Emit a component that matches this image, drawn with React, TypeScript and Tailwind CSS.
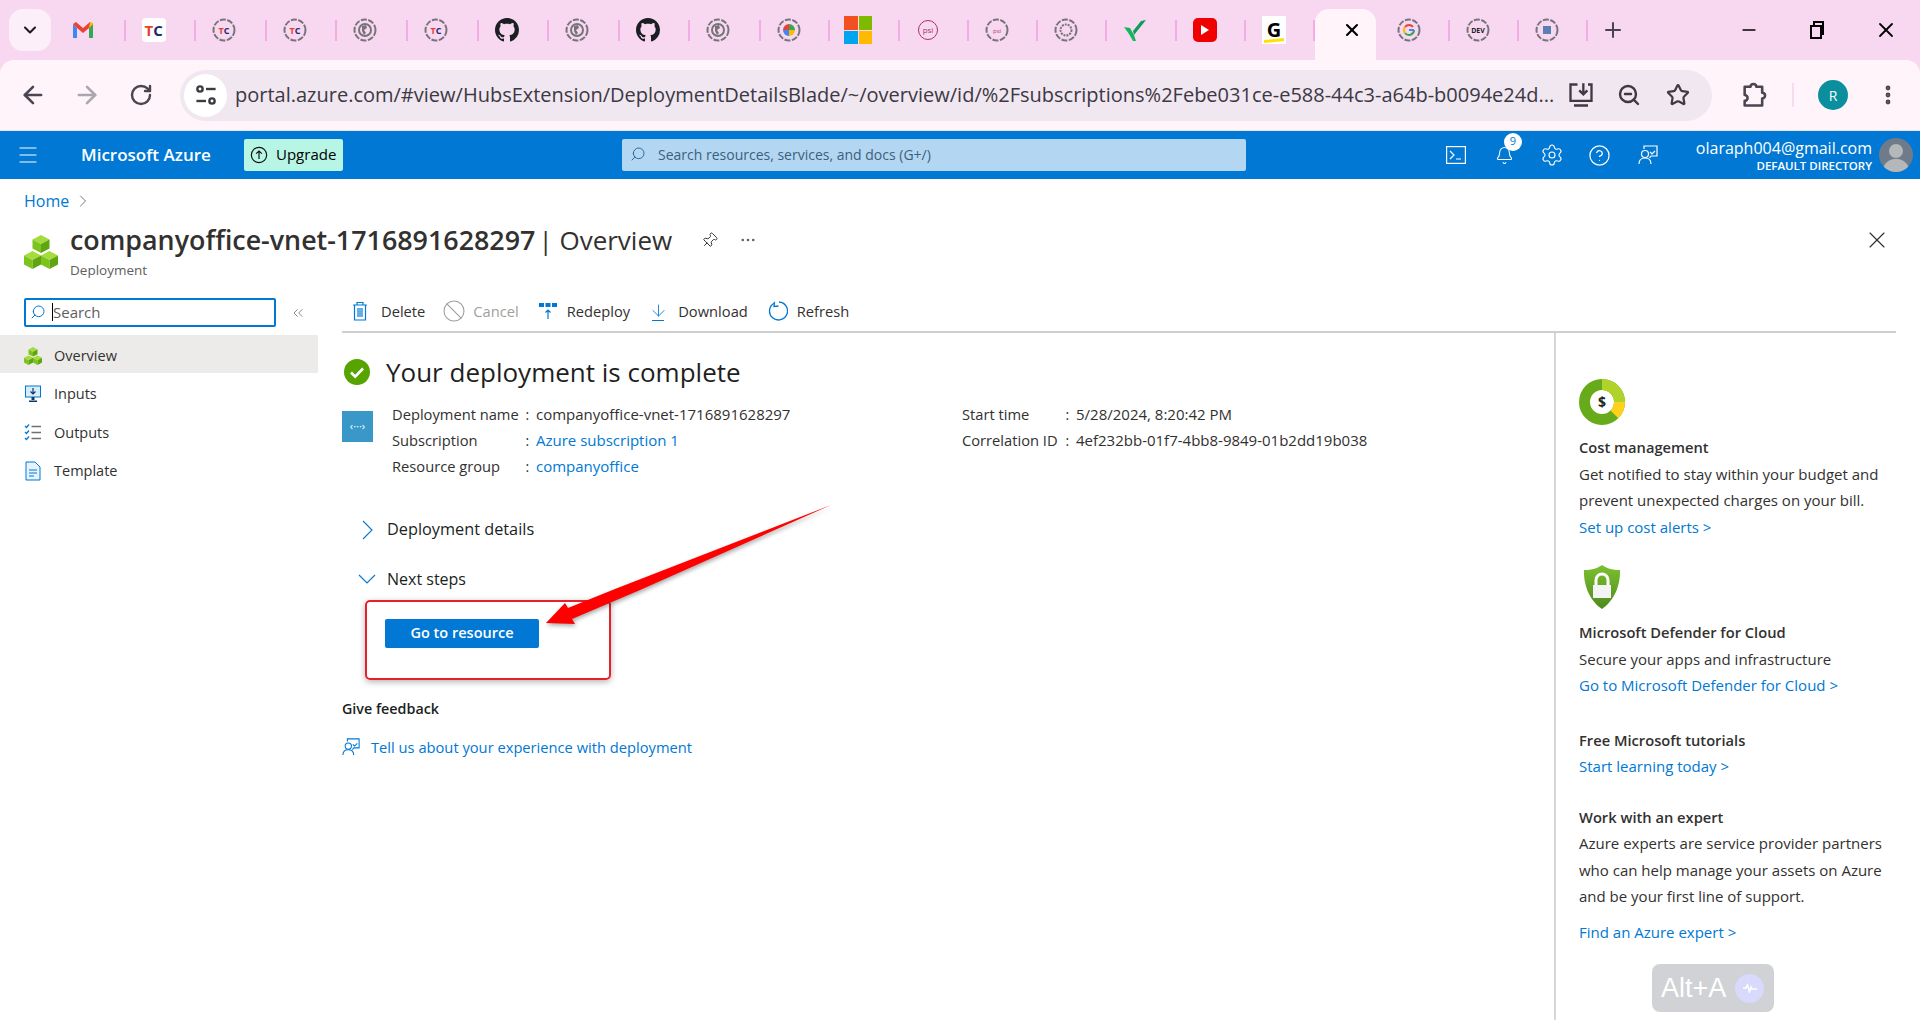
import React from 'react';
import {
  ArrowLeft, ArrowRight, RotateCw, ChevronDown, X, Plus, Minus, Search, Star, MoreVertical,
  Settings, HelpCircle, Bell, Menu, ChevronRight, ChevronsLeft, Pin, MoreHorizontal,
  ArrowDown, Ban, ZoomOut,
} from 'lucide-react';

const Ring = ({ children }: { children?: React.ReactNode }) => (
  <svg viewBox="0 0 24 24" className="h-6 w-6">
    <circle cx="12" cy="12" r="10.5" fill="none" stroke="#77737a" strokeWidth="2" strokeDasharray="6 1.5" />
    {children}
  </svg>
);

const tc = (
  <text x="12" y="15.5" fontSize="9" fontWeight="700" textAnchor="middle" fill="#1b2a6b">
    <tspan fill="#e8402a">T</tspan>C
  </text>
);
const globe = (
  <>
    <circle cx="12" cy="12" r="6" fill="none" stroke="#77737a" strokeWidth="2" />
    <path d="M9 8l4-1 1 3-3 2 2 3-2 2-2-4z" fill="#77737a" />
  </>
);

const GitHub = () => (
  <svg viewBox="0 0 16 16" className="h-6 w-6" fill="#1b1f24">
    <path d="M8 0C3.58 0 0 3.58 0 8c0 3.54 2.29 6.53 5.47 7.59.4.07.55-.17.55-.38 0-.19-.01-.82-.01-1.49-2.01.37-2.53-.49-2.69-.94-.09-.23-.48-.94-.82-1.13-.28-.15-.68-.52-.01-.53.63-.01 1.08.58 1.23.82.72 1.21 1.87.87 2.33.66.07-.52.28-.87.51-1.07-1.78-.2-3.64-.89-3.64-3.95 0-.87.31-1.59.82-2.15-.08-.2-.36-1.02.08-2.12 0 0 .67-.21 2.2.82.64-.18 1.32-.27 2-.27s1.36.09 2 .27c1.53-1.04 2.2-.82 2.2-.82.44 1.1.16 1.92.08 2.12.51.56.82 1.27.82 2.15 0 3.07-1.87 3.75-3.65 3.95.29.25.54.73.54 1.48 0 1.07-.01 1.93-.01 2.2 0 .21.15.46.55.38A8.01 8.01 0 0 0 16 8c0-4.42-3.58-8-8-8Z" />
  </svg>
);

const Gmail = () => (
  <svg viewBox="0 0 24 24" className="h-6 w-6">
    <path d="M2 6v14h4V10z" fill="#4285f4" />
    <path d="M18 10v10h4V6z" fill="#34a853" />
    <path d="M2 6l4 4 6 5 6-5 4-4-3-2-7 6-7-6z" fill="#ea4335" />
    <path d="M18 10l4-4v-1l-3-1z" fill="#fbbc04" />
  </svg>
);

const MsLogo = () => (
  <div className="-ml-[2px] grid h-7 w-7 grid-cols-2 gap-[1px]">
    <div className="bg-[#f25022]" />
    <div className="bg-[#7fba00]" />
    <div className="bg-[#00a4ef]" />
    <div className="bg-[#ffb900]" />
  </div>
);

const tabIcons: React.ReactNode[] = [
  <Gmail />,
  <div className="flex h-6 w-6 items-center justify-center rounded-sm bg-white text-[15px] font-bold leading-none text-[#1b2a6b]"><span className="text-[#e8402a]">T</span>C</div>,
  <Ring>{tc}</Ring>,
  <Ring>{tc}</Ring>,
  <Ring>{globe}</Ring>,
  <Ring>{tc}</Ring>,
  <GitHub />,
  <Ring>{globe}</Ring>,
  <GitHub />,
  <Ring>{globe}</Ring>,
  <Ring>
    <path d="M12 6a6 6 0 0 0-6 6h6z" fill="#ea4335" />
    <path d="M12 6a6 6 0 0 1 6 6h-6z" fill="#34a853" />
    <path d="M6 12a6 6 0 0 0 6 6v-6z" fill="#4285f4" />
    <path d="M18 12a6 6 0 0 1-6 6v-6z" fill="#fbbc04" />
  </Ring>,
  <MsLogo />,
  <svg viewBox="0 0 24 24" className="h-6 w-6">
    <circle cx="12" cy="12" r="9.5" fill="none" stroke="#a8326e" strokeWidth="1" />
    <text x="12" y="15" fontSize="8" textAnchor="middle" fill="#a8326e">psi</text>
  </svg>,
  <Ring><text x="12" y="14.5" fontSize="6" textAnchor="middle" fill="#a8326e">psi</text></Ring>,
  <Ring><circle cx="12" cy="12" r="5.5" fill="none" stroke="#77737a" strokeWidth="2" strokeDasharray="2 1" /></Ring>,
  <svg viewBox="0 0 24 24" className="h-6 w-6">
    <path d="M1 9l6 1 4 7 2 6h-3L6 16z" fill="#16b55d" />
    <path d="M11 17L23 2l-5 1-8 10z" fill="#0f9d58" />
  </svg>,
  <div className="flex h-6 w-6 items-center justify-center rounded-[5px] bg-[#f00000]">
    <div className="h-0 w-0 border-y-[5px] border-l-[8px] border-y-transparent border-l-white" />
  </div>,
  <div className="relative flex h-7 w-6 items-center justify-center bg-white text-[20px] font-bold leading-none text-black">
    G
    <div className="absolute bottom-[2px] left-[2px] h-[3px] w-5 -rotate-6 bg-[#ffe100]" />
  </div>,
];

const tabIconsAfter: React.ReactNode[] = [
  <Ring>
    <path d="M17 12a5 5 0 0 1-9 3" fill="none" stroke="#34a853" strokeWidth="2" />
    <path d="M8 15a5 5 0 0 1 0-6" fill="none" stroke="#fbbc04" strokeWidth="2" />
    <path d="M8 9a5 5 0 0 1 8 0" fill="none" stroke="#ea4335" strokeWidth="2" />
    <path d="M12 12h5" stroke="#4285f4" strokeWidth="2" />
  </Ring>,
  <Ring><text x="12" y="14.5" fontSize="7" fontWeight="700" textAnchor="middle" fill="#222">DEV</text></Ring>,
  <Ring><rect x="8" y="8" width="8" height="8" fill="#5b7fb5" /></Ring>,
];

const Tab = ({ icon, width }: { icon: React.ReactNode; width: string }) => (
  <div className={`relative flex h-[60px] shrink-0 items-center pl-[16px] ${width}`}>
    {icon}
    <div className="absolute right-0 top-[20px] h-[21px] w-[2px] bg-[#f2aee4]" />
  </div>
);

const TabStrip = () => (
  <div className="flex h-[60px] items-center bg-[#f8d8f0]">
    <div className="ml-[9px] mr-[4px] mt-[9px] flex h-[42px] w-[42px] shrink-0 items-center justify-center self-start rounded-[14px] bg-[#fdeffa]">
      <ChevronDown className="h-5 w-5 text-[#1d1b20]" strokeWidth={2.5} />
    </div>
    {tabIcons.map((icon, i) => (
      <Tab key={i} icon={icon} width={i < 10 ? 'w-[70.6px]' : 'w-[69.3px]'} />
    ))}
    <div className="flex h-[51px] w-[61px] shrink-0 items-center justify-center self-end rounded-t-[14px] bg-[#fff4fa] pb-[9px] pl-[13px]">
      <X className="h-5 w-5 text-black" strokeWidth={2.5} />
    </div>
    <div className="ml-[5px] flex shrink-0">
      {tabIconsAfter.map((icon, i) => (
        <Tab key={i} icon={icon} width="w-[69px]" />
      ))}
    </div>
    <Plus className="ml-[13px] h-6 w-6 shrink-0 text-[#48454e]" strokeWidth={2} />
    <Minus className="ml-[114px] h-5 w-5 shrink-0 text-black" strokeWidth={2} />
    <svg viewBox="0 0 20 20" className="ml-[48px] h-5 w-5 shrink-0" fill="none" stroke="black" strokeWidth="2">
      <rect x="4" y="6" width="10" height="12" />
      <path d="M7 5V2h9v12h-2" />
    </svg>
    <X className="ml-[47px] h-6 w-6 shrink-0 text-black" strokeWidth={1.8} />
  </div>
);

const UrlBar = () => (
  <div className="bg-[#f8d8f0]">
    <div className="flex h-[70px] items-center rounded-t-[14px] bg-[#fff4fa]">
      <ArrowLeft className="ml-[19px] h-7 w-7 shrink-0 text-[#4a4550]" strokeWidth={2.2} />
      <ArrowRight className="ml-[26px] h-7 w-7 shrink-0 text-[#aaa6ad]" strokeWidth={2.2} />
      <RotateCw className="ml-[28px] h-6 w-6 shrink-0 text-[#4a4550]" strokeWidth={2.4} />
      <div className="ml-[27px] flex h-[51px] w-[1532px] shrink-0 items-center rounded-full bg-[#f0e7f0]">
        <div className="ml-[4px] flex h-[43px] w-[43px] shrink-0 items-center justify-center rounded-full bg-white">
          <svg viewBox="0 0 20 20" className="h-6 w-6" fill="none" stroke="#3d3a42" strokeWidth="2">
            <circle cx="5" cy="5" r="2.2" /><path d="M10 5h8" />
            <circle cx="15" cy="15" r="2.2" /><path d="M2 15h8" />
          </svg>
        </div>
        <span className="ml-[8px] w-[1320px] truncate whitespace-nowrap text-[20px] text-[#3c3844]">
          portal.azure.com/#view/HubsExtension/DeploymentDetailsBlade/~/overview/id/%2Fsubscriptions%2Febe031ce-e588-44c3-a64b-b0094e24d...
        </span>
        <svg viewBox="0 0 24 24" className="ml-[12px] h-7 w-7 shrink-0" fill="none" stroke="#3d3a42" strokeWidth="2">
          <path d="M9 3H3v14h18V3h-3M6 21h12" /><path d="M14 2v9m-3.5-3 3.5 3.5L17.5 8" />
        </svg>
        <ZoomOut className="ml-[22px] h-6 w-6 shrink-0 text-[#3d3a42]" strokeWidth={2.4} />
        <Star className="ml-[25px] h-6 w-6 shrink-0 text-[#3d3a42]" strokeWidth={2.2} />
      </div>
      <svg viewBox="0 0 24 24" className="ml-[28px] h-7 w-7 shrink-0" fill="none" stroke="#4a4550" strokeWidth="2.2" strokeLinejoin="round">
        <path d="M4 5h5a2.5 2.5 0 0 1 5 0h5v5a2.5 2.5 0 0 1 0 5v6H4v-4a2.5 2.5 0 0 0 0-5z" />
      </svg>
      <div className="ml-[24px] h-[24px] w-[2px] shrink-0 bg-[#f7dcef]" />
      <div className="ml-[24px] flex h-[30px] w-[30px] shrink-0 items-center justify-center rounded-full bg-[#0b8f9e] text-[14px] text-white">R</div>
      <MoreVertical className="ml-[28px] h-6 w-6 shrink-0 text-[#4a4550]" strokeWidth={2.8} />
    </div>
  </div>
);

const FeedbackIcon = ({ className, stroke }: { className: string; stroke: string }) => (
  <svg viewBox="0 0 20 20" className={className} fill="none" stroke={stroke} strokeWidth="1.2">
    <circle cx="7" cy="9" r="3.5" />
    <path d="M1 19c0-4 2.5-6 6-6s6 2 6 6" />
    <path d="M6 4V1h13v10h-6l-1.5 2" />
    <path d="M12 7l2 2 3-3" />
  </svg>
);

const PortalHeader = () => (
  <header className="flex h-[48px] items-center bg-[#0078d4] text-white">
    <Menu className="ml-[16px] h-6 w-6 shrink-0" strokeWidth={1.2} />
    <span className="ml-[41px] w-[131px] shrink-0 whitespace-nowrap text-[17px] font-semibold">Microsoft Azure</span>
    <div className="ml-[32px] flex h-[32px] w-[99px] shrink-0 items-center rounded-[2px] bg-[#b7f5e4] pb-[1px] text-[15px] text-black">
      <svg viewBox="0 0 20 20" className="ml-[6px] mr-[8px] h-[18px] w-[18px]" fill="none" stroke="#111" strokeWidth="1.3">
        <circle cx="10" cy="10" r="8.5" /><path d="M10 14.5v-9M6.8 8.5 10 5.5l3.2 3" />
      </svg>
      Upgrade
    </div>
    <div className="ml-[279px] flex h-[32px] w-[624px] shrink-0 items-center rounded-[2px] bg-[#b3d7f2] pb-[2px] text-[14px] text-[#3b5f7d]">
      <Search className="ml-[8px] mr-[12px] h-4 w-4 -scale-x-100 text-[#2f6a99]" strokeWidth={1.5} />
      Search resources, services, and docs (G+/)
    </div>
    <svg viewBox="0 0 20 18" className="ml-[200px] h-[18px] w-[20px] shrink-0" fill="none" stroke="white" strokeWidth="1.2">
      <rect x="0.6" y="0.6" width="18.8" height="16.8" />
      <path d="M4 5l4 4-4 4M10 13h5" />
    </svg>
    <div className="relative ml-[29px] shrink-0">
      <Bell className="h-[19px] w-[19px]" strokeWidth={1.3} />
      <div className="absolute -right-[8px] -top-[13px] flex h-[18px] w-[18px] items-center justify-center rounded-full bg-white text-[11px] text-[#0078d4]">9</div>
    </div>
    <Settings className="ml-[26px] h-6 w-6 shrink-0" strokeWidth={1.1} />
    <HelpCircle className="ml-[24px] h-[23px] w-[23px] shrink-0" strokeWidth={1.3} />
    <FeedbackIcon className="ml-[27px] h-5 w-5 shrink-0" stroke="white" />
    <div className="ml-auto flex flex-col items-end whitespace-nowrap">
      <span className="text-[16px] leading-[20px]">olaraph004@gmail.com</span>
      <span className="text-[11.5px] font-semibold leading-[15px]">DEFAULT DIRECTORY</span>
    </div>
    <div className="relative ml-[7px] mr-[7px] h-[34px] w-[34px] shrink-0 overflow-hidden rounded-full bg-[#6f7b88]">
      <div className="absolute left-[10px] top-[6px] h-[14px] w-[14px] rounded-full bg-[#b4b8bb]" />
      <div className="absolute left-[4px] top-[21px] h-[16px] w-[26px] rounded-t-[12px] bg-[#b4b8bb]" />
    </div>
  </header>
);

const Cubes = ({ className }: { className: string }) => (
  <svg viewBox="0 0 34 34" className={className}>
    {[[17, 0], [8.5, 16], [25.5, 16]].map(([x, y], i) => (
      <g key={i} transform={`translate(${x - 8.5} ${y})`}>
        <path d="M8.5 0 17 4.5 8.5 9 0 4.5z" fill="#a4dc3c" />
        <path d="M0 4.5 8.5 9v9L0 13.5z" fill="#7cc31e" />
        <path d="M17 4.5 8.5 9v9l8.5-4.5z" fill="#5ea50f" />
      </g>
    ))}
  </svg>
);

const PageTitle = () => (
  <div className="relative h-[116px] shrink-0">
    <div className="flex h-[42px] items-center pl-[24px] pt-[2px] text-[16px] text-[#0078d4]">
      Home
      <ChevronRight className="ml-[4px] h-5 w-5 text-[#605e5c]" strokeWidth={1} />
    </div>
    <div className="flex pl-[24px] pt-[3px]">
      <Cubes className="mt-[11px] h-[34px] w-[34px]" />
      <div className="ml-[12px]">
        <div className="flex h-[32px] items-center whitespace-nowrap text-[26.85px] leading-[32px] text-[#323130]">
          <span className="font-semibold">companyoffice-vnet-1716891628297</span>
          <span className="ml-[3px] text-[26px]">| Overview</span>
          <Pin className="ml-[29px] h-[17px] w-[17px] rotate-45 text-[#323130]" strokeWidth={1.3} />
          <MoreHorizontal className="ml-[21px] h-[18px] w-[18px] text-[#605e5c]" strokeWidth={1.5} />
        </div>
        <div className="mt-[5px] text-[13.5px] leading-[18px] text-[#605e5c]">Deployment</div>
      </div>
    </div>
    <X className="absolute right-[29px] top-[47px] h-7 w-7 text-[#323130]" strokeWidth={1} />
  </div>
);

const InputsIcon = () => (
  <svg viewBox="0 0 18 18" className="h-[18px] w-[18px]">
    <rect x="1.5" y="1" width="15" height="11" fill="#d6ecfb" stroke="#0078d4" />
    <path d="M9 3v6M6.5 6.5 9 9l2.5-2.5" fill="none" stroke="#0b3a6b" strokeWidth="1.2" />
    <path d="M7.5 12h3v3h-3zM5 15.5h8V17H5z" fill="#0b3a6b" />
  </svg>
);

const OutputsIcon = () => (
  <svg viewBox="0 0 18 18" className="h-[18px] w-[18px]" fill="none" strokeWidth="1.3">
    <path d="M1 3l1.5 1.5L5 1.5M1 9l1.5 1.5L5 7.5M1 15l1.5 1.5L5 13.5" stroke="#0078d4" />
    <path d="M7.5 3.5H17M7.5 9.5H17M7.5 15.5H17" stroke="#707070" strokeWidth="1.6" />
  </svg>
);

const TemplateIcon = () => (
  <svg viewBox="0 0 18 20" className="h-[20px] w-[18px]">
    <path d="M2 1h9l5 5v13H2z" fill="#e6f3fc" stroke="#0078d4" />
    <path d="M5 9h8M5 12h8M5 15h5" stroke="#0078d4" />
  </svg>
);

const sideItems: { label: string; icon: React.ReactNode; active?: boolean }[] = [
  { label: 'Overview', icon: <Cubes className="h-[18px] w-[18px]" />, active: true },
  { label: 'Inputs', icon: <InputsIcon /> },
  { label: 'Outputs', icon: <OutputsIcon /> },
  { label: 'Template', icon: <TemplateIcon /> },
];

const Sidebar = () => (
  <aside className="w-[318px] shrink-0 pt-[3px]">
    <div className="flex items-center pl-[24px]">
      <div className="flex h-[29px] w-[252px] items-center rounded-[2px] border-2 border-[#0078d4] pb-[1px] text-[15px] text-[#605e5c]">
        <Search className="ml-[4px] h-4 w-4 -scale-x-100 text-[#0078d4]" strokeWidth={1.5} />
        <div className="ml-[6px] h-[18px] w-[1px] bg-black" />
        Search
      </div>
      <ChevronsLeft className="ml-[14px] h-4 w-4 text-[#605e5c]" strokeWidth={1.1} />
    </div>
    <nav className="mt-[8px]">
      {sideItems.map((item) => (
        <div
          key={item.label}
          className={`flex h-[38.4px] items-center pl-[24px] pt-[3px] text-[14.5px] text-[#323130] ${item.active ? 'bg-[#edebe9]' : ''}`}
        >
          <div className="flex w-[18px] justify-center">{item.icon}</div>
          <span className="ml-[12px]">{item.label}</span>
        </div>
      ))}
    </nav>
  </aside>
);

const commands: { label: string; icon: React.ReactNode; off?: boolean; ml: string; gap: string }[] = [
  {
    label: 'Delete',
    icon: (
      <svg viewBox="0 0 16 20" className="h-5 w-4" fill="none" stroke="#0078d4" strokeWidth="1.2">
        <path d="M1 4h14M5 4V1.5h6V4M2.5 4v15h11V4M6 7v9M8 7v9M10 7v9" />
      </svg>
    ),
    ml: 'ml-[10px]',
    gap: 'ml-[13px]',
  },
  { label: 'Cancel', icon: <Ban className="h-6 w-6 -mx-[2px] text-[#a19f9d]" strokeWidth={1.1} />, off: true, ml: 'ml-[19px]', gap: 'ml-[9px]' },
  {
    label: 'Redeploy',
    icon: (
      <svg viewBox="0 0 18 20" className="h-5 w-[18px]" fill="none">
        <path d="M0 2h5v4H0zM6.5 2h5v4h-5zM13 2h5v4h-5z" fill="#0078d4" />
        <path d="M9 18V9M6.5 11.5 9 9l2.5 2.5" stroke="#0078d4" strokeWidth="1.2" />
      </svg>
    ),
    ml: 'ml-[20px]',
    gap: 'ml-[10px]',
  },
  {
    label: 'Download',
    icon: (
      <div className="flex w-[14px] flex-col items-center">
        <ArrowDown className="-mx-1 h-[19px] w-[19px] shrink-0 text-[#0078d4]" strokeWidth={1.1} />
        <div className="h-[1px] w-[12px] bg-[#0078d4]" />
      </div>
    ),
    ml: 'ml-[21px]',
    gap: 'ml-[13px]',
  },
  {
    label: 'Refresh',
    icon: (
      <svg viewBox="0 0 20 20" className="h-5 w-5" fill="none" stroke="#0078d4" strokeWidth="1.3">
        <path d="M6 2.2A9 9 0 1 0 11 1" />
        <path d="M6.5 0.8 6 5.5l4.5-.5" />
      </svg>
    ),
    ml: 'ml-[20px]',
    gap: 'ml-[9px]',
  },
];

const CommandBar = () => (
  <div className="mr-[24px] flex h-[38px] shrink-0 items-center border-b-2 border-[#d0cfce] pb-[4px] text-[14.7px]">
    {commands.map((c) => (
      <div key={c.label} className={`flex items-center ${c.ml} ${c.off ? 'text-[#a19f9d]' : 'text-[#323130]'}`}>
        {c.icon}
        <span className={c.gap}>{c.label}</span>
      </div>
    ))}
  </div>
);

const InfoRow = ({ label, value, link, w }: { label: string; value: string; link?: boolean; w: string }) => (
  <div className="flex h-[26.2px] items-center whitespace-nowrap">
    <span className={`${w} shrink-0 text-[14.7px] text-[#323130]`}>{label}</span>
    <span className="w-[10.5px] shrink-0 text-[#323130]">:</span>
    <span className={`text-[15px] ${link ? 'text-[#0078d4]' : 'text-[#323130]'}`}>{value}</span>
  </div>
);

const Main = () => (
  <main className="relative min-w-0 flex-1 pt-[22px]">
    <div className="flex h-[34px] items-center">
      <svg viewBox="0 0 26 26" className="ml-[2px] h-[26px] w-[26px]">
        <circle cx="13" cy="13" r="13" fill="#57a300" />
        <path d="M7 13.5l4.2 4.2L19 9.5" fill="none" stroke="white" strokeWidth="2.6" />
      </svg>
      <h1 className="ml-[16px] text-[26px] leading-[34px] text-[#1f1f1f]">Your deployment is complete</h1>
    </div>
    <div className="mt-[12px] flex text-[14px]">
      <div className="mt-[10px] flex h-[31px] w-[31px] shrink-0 items-center justify-center bg-[#3a98c9] text-[11px] text-white">‹···›</div>
      <div className="ml-[19px] w-[570px] shrink-0">
        <InfoRow w="w-[133.5px]" label="Deployment name" value="companyoffice-vnet-1716891628297" />
        <InfoRow w="w-[133.5px]" label="Subscription" value="Azure subscription 1" link />
        <InfoRow w="w-[133.5px]" label="Resource group" value="companyoffice" link />
      </div>
      <div>
        <InfoRow w="w-[103.5px]" label="Start time" value="5/28/2024, 8:20:42 PM" />
        <InfoRow w="w-[103.5px]" label="Correlation ID" value="4ef232bb-01f7-4bb8-9849-01b2dd19b038" />
      </div>
    </div>
    <div className="mt-[38px] flex h-[24px] items-center text-[16.3px] font-medium text-[#201f1e]">
      <svg viewBox="0 0 11 20" className="ml-[20px] h-5 w-[11px]" fill="none" stroke="#0078d4" strokeWidth="1.1">
        <path d="M1 1l9 9-9 9" />
      </svg>
      <span className="ml-[14px]">Deployment details</span>
    </div>
    <div className="mt-[25px] flex h-[24px] items-center text-[16px] font-medium text-[#201f1e]">
      <svg viewBox="0 0 18 10" className="ml-[16px] h-[10px] w-[18px]" fill="none" stroke="#0078d4" strokeWidth="1.1">
        <path d="M1 1l8 8 8-8" />
      </svg>
      <span className="ml-[11px]">Next steps</span>
    </div>
    <button className="ml-[43px] mt-[28px] flex h-[29px] w-[154px] items-center justify-center rounded-[2px] bg-[#0078d4] text-[14.5px] font-semibold text-white">
      Go to resource
    </button>
    <div className="mt-[50px] text-[14.3px] font-semibold leading-[22px] text-[#201f1e]">Give feedback</div>
    <div className="mt-[16px] flex items-center text-[14.7px] text-[#0078d4]">
      <FeedbackIcon className="h-[18px] w-[18px]" stroke="#0078d4" />
      <span className="ml-[11px]">Tell us about your experience with deployment</span>
    </div>
  </main>
);

const Heading = ({ children }: { children: React.ReactNode }) => (
  <div className="text-[14.7px] font-semibold leading-[26.5px] text-[#323130]">{children}</div>
);
const Body = ({ children }: { children: React.ReactNode }) => (
  <div className="text-[15px] leading-[26.5px] text-[#323130]">{children}</div>
);
const More = ({ children }: { children: React.ReactNode }) => (
  <div className="text-[15px] leading-[26.5px] text-[#0078d4]">{children}</div>
);

const RightRail = () => (
  <aside className="w-[366px] shrink-0 border-l-2 border-[#d6d6d6] pl-[23px] pt-[46px]">
    <svg viewBox="0 0 46 46" className="h-[46px] w-[46px]">
      <circle cx="23" cy="23" r="17.5" fill="none" stroke="#68ab1a" strokeWidth="11" />
      <path d="M23 5.5A17.5 17.5 0 0 1 40.5 23" fill="none" stroke="#b0d32b" strokeWidth="11" />
      <path d="M40.5 23a17.5 17.5 0 0 1-5.1 12.4" fill="none" stroke="#ffd11a" strokeWidth="11" />
      <text x="23" y="28" fontSize="14" fontWeight="700" textAnchor="middle" fill="#222">$</text>
    </svg>
    <div className="mt-[9px]">
      <Heading>Cost management</Heading>
      <Body>Get notified to stay within your budget and<br />prevent unexpected charges on your bill.</Body>
      <More>Set up cost alerts &gt;</More>
    </div>
    <svg viewBox="0 0 38 44" className="ml-[4px] mt-[25px] h-[44px] w-[38px]">
      <defs>
        <linearGradient id="sh" x1="0" y1="0" x2="0" y2="1">
          <stop offset="0" stopColor="#7cc12f" />
          <stop offset="1" stopColor="#4f8a1e" />
        </linearGradient>
      </defs>
      <path d="M19 0c4 3 10 5 18 5 0 0 2 25-18 39C-1 30 1 5 1 5c8 0 14-2 18-5z" fill="url(#sh)" />
      <path d="M13 20v-5a6 6 0 0 1 12 0v5" fill="none" stroke="white" strokeWidth="3" />
      <rect x="10" y="20" width="18" height="13" fill="#f4f4f4" />
    </svg>
    <div className="mt-[10px]">
      <Heading>Microsoft Defender for Cloud</Heading>
      <Body>Secure your apps and infrastructure</Body>
      <More>Go to Microsoft Defender for Cloud &gt;</More>
    </div>
    <div className="mt-[28px]">
      <Heading>Free Microsoft tutorials</Heading>
      <More>Start learning today &gt;</More>
    </div>
    <div className="mt-[24px]">
      <Heading>Work with an expert</Heading>
      <Body>Azure experts are service provider partners<br />who can help manage your assets on Azure<br />and be your first line of support.</Body>
      <div className="mt-[9px]"><More>Find an Azure expert &gt;</More></div>
    </div>
  </aside>
);

const Annotation = () => (
  <>
    <div className="absolute left-[365px] top-[600px] h-[80px] w-[246px] rounded-[5px] border-2 border-[#e8202a] shadow-[0_2px_6px_rgba(0,0,0,0.3)]" />
    <svg viewBox="0 0 1920 1020" className="pointer-events-none absolute left-0 top-0 h-[1020px] w-[1920px] drop-shadow-[1px_2px_2px_rgba(0,0,0,0.35)]">
      <path d="M831 505 640 590 572 619 575 624 546 623 565 603 568 608 615 589z" fill="#ff0000" />
    </svg>
    <div className="absolute left-[1652px] top-[964px] flex h-[48px] w-[122px] items-center rounded-[8px] bg-[#d1d2d5] pl-[9px] font-['Liberation_Sans',sans-serif] text-[27px] text-white">
      Alt+A
      <div className="ml-[9px] flex h-[29px] w-[29px] items-center justify-center rounded-full bg-[#d8d9fb]">
        <svg viewBox="0 0 16 10" className="h-[10px] w-[16px]" fill="none" stroke="white" strokeWidth="1.4">
          <path d="M1 5h3l1.5-3 2 7 1.5-5 1 2h5" />
        </svg>
      </div>
    </div>
  </>
);

export default function App() {
  return (
    <div className="relative flex h-[1020px] w-[1920px] flex-col overflow-hidden bg-white font-['Open_Sans','Noto_Sans',sans-serif]">
      <TabStrip />
      <UrlBar />
      <div className="h-[1px] bg-[#e8e4e8]" />
      <PortalHeader />
      <PageTitle />
      <div className="flex min-h-0 flex-1">
        <Sidebar />
        <div className="ml-[24px] flex min-w-0 flex-1 flex-col">
          <CommandBar />
          <div className="flex min-h-0 flex-1">
            <Main />
            <RightRail />
          </div>
        </div>
      </div>
      <Annotation />
    </div>
  );
}
